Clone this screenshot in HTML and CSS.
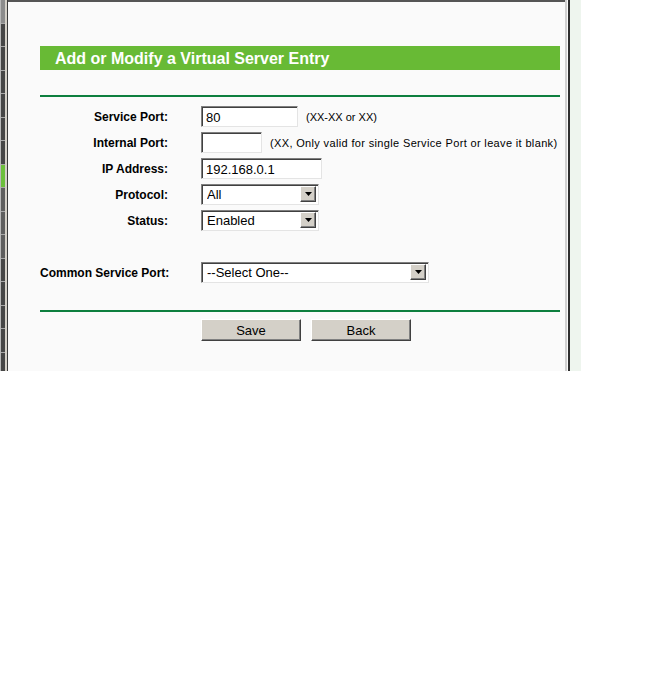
FILE: index.html
```html
<!DOCTYPE html>
<html>
  <head>
    <title>Virtual Servers</title>
    <link rel="stylesheet" href="styles.css">
  </head>
  <body>
    <div class="frame">
      <div class="menu-strip">
        <div class="menu-edge">
          <div class="menu-item light"></div>
          <div class="menu-item"></div>
          <div class="menu-item"></div>
          <div class="menu-item"></div>
          <div class="menu-item"></div>
          <div class="menu-item"></div>
          <div class="menu-item"></div>
          <div class="menu-item active"></div>
          <div class="menu-item mid"></div>
          <div class="menu-item mid"></div>
          <div class="menu-item mid"></div>
          <div class="menu-item"></div>
          <div class="menu-item"></div>
          <div class="menu-item"></div>
          <div class="menu-item"></div>
          <div class="menu-item"></div>
        </div>
        <div class="menu-border"></div>
      </div>
      <div class="main">
        <div class="title-bar">Add or Modify a Virtual Server Entry</div>
        <div class="rule"></div>
        <form class="form-grid" id="vs-form">
          <label for="servicePort">Service Port:</label>
          <div class="field">
            <input type="text" id="servicePort" class="w-97" value="80">
            <span class="hint">(XX-XX or XX)</span>
          </div>

          <label for="internalPort">Internal Port:</label>
          <div class="field">
            <input type="text" id="internalPort" class="w-61">
            <span class="hint hint-long">(XX, Only valid for single Service Port or leave it blank)</span>
          </div>

          <label for="ipAddress">IP Address:</label>
          <div class="field">
            <input type="text" id="ipAddress" class="w-121" value="192.168.0.1">
          </div>

          <label for="protocol">Protocol:</label>
          <div class="field">
            <div class="select w-118">
              <select id="protocol">
                <option>All</option>
                <option>TCP</option>
                <option>UDP</option>
              </select>
              <span class="arrow"><svg width="7" height="4" viewBox="0 0 7 4"><path d="M0 0h7L3.5 4z" fill="#000"/></svg></span>
            </div>
          </div>

          <label for="status">Status:</label>
          <div class="field">
            <div class="select w-118">
              <select id="status">
                <option>Enabled</option>
                <option>Disabled</option>
              </select>
              <span class="arrow"><svg width="7" height="4" viewBox="0 0 7 4"><path d="M0 0h7L3.5 4z" fill="#000"/></svg></span>
            </div>
          </div>

          <div class="spacer"></div>

          <label for="commonPort">Common Service Port:</label>
          <div class="field">
            <div class="select w-228">
              <select id="commonPort">
                <option>--Select One--</option>
                <option>DNS</option>
                <option>FTP</option>
                <option>HTTP</option>
              </select>
              <span class="arrow"><svg width="7" height="4" viewBox="0 0 7 4"><path d="M0 0h7L3.5 4z" fill="#000"/></svg></span>
            </div>
          </div>
        </form>
        <div class="rule rule-bottom"></div>
        <div class="buttons">
          <button type="button" id="save">Save</button>
          <button type="button" id="back">Back</button>
        </div>
      </div>
      <div class="scroll-edge">
        <div class="edge-light"></div>
        <div class="edge-gap"></div>
        <div class="edge-dark"></div>
        <div class="edge-fill"></div>
      </div>
    </div>
  </body>
</html>
```

FILE: styles.css
```css
body {
  margin: 0;
  background: #fff;
  font-family: "Liberation Sans", Arial, sans-serif;
  color: #000;
}
.frame {
  display: flex;
  width: 581px;
  height: 371px;
}
.menu-strip {
  display: flex;
  width: 8px;
  background: #fafafa;
}
.menu-edge {
  width: 5px;
  border-left: 1px solid #b8b8b8;
  box-sizing: border-box;
  display: flex;
  flex-direction: column;
}
.menu-item {
  height: 22.5px;
  background: #464646;
  border-bottom: 1px solid #a8a8a8;
  flex-shrink: 0;
}
.menu-item.light { background: #8c8c8c; }
.menu-item.mid { background: #5e5e5e; }
.menu-item.active { background: #6cbf3c; }
.menu-border {
  width: 3px;
  border-left: 2px solid #d4d0c8;
  border-right: 1px solid #3a3a3a;
  box-sizing: border-box;
}
.main {
  flex: 1;
  background: #fafafa;
  border-top: 2px solid #555;
  padding: 44px 0 0 32px;
}
.title-bar {
  width: 520px;
  height: 24px;
  box-sizing: border-box;
  background: #68ba35;
  color: #fff;
  font-weight: bold;
  font-size: 16px;
  line-height: 25px;
  padding-left: 15px;
}
.rule {
  width: 520px;
  height: 2px;
  background: #0d7f3e;
  margin-top: 25px;
}
.rule-bottom {
  margin-top: 27px;
}
.form-grid {
  display: grid;
  grid-template-columns: 128px auto;
  grid-auto-rows: 21px;
  column-gap: 33px;
  row-gap: 5px;
  align-items: center;
  margin: 9px 0 0;
}
.form-grid label {
  text-align: right;
  font-weight: bold;
  font-size: 12px;
  white-space: nowrap;
}
.field {
  display: flex;
  align-items: center;
  gap: 8px;
  height: 21px;
}
.spacer {
  grid-column: 1 / 3;
}
.hint {
  font-size: 11px;
  color: #000;
  white-space: nowrap;
}
.hint-long {
  letter-spacing: 0.35px;
}
input[type="text"] {
  height: 21px;
  box-sizing: border-box;
  border: 1px solid;
  border-color: #7f7f7f #e4e4e4 #e4e4e4 #7f7f7f;
  box-shadow: inset 1px 1px 0 #404040;
  background: #fff;
  font-family: "Liberation Sans", Arial, sans-serif;
  font-size: 13px;
  padding: 1px 4px 0;
  margin: 0;
  outline: none;
}
.w-97 { width: 97px; }
.w-61 { width: 61px; }
.w-121 { width: 121px; }
.w-118 { width: 118px; }
.w-228 { width: 228px; }
.select {
  display: flex;
  height: 21px;
  box-sizing: border-box;
  border: 1px solid;
  border-color: #7f7f7f #e4e4e4 #e4e4e4 #7f7f7f;
  box-shadow: inset 1px 1px 0 #404040;
  background: #fff;
  padding: 1px 2px 2px 1px;
}
.select select {
  flex: 1;
  appearance: none;
  -webkit-appearance: none;
  border: none;
  background: transparent;
  font-family: "Liberation Sans", Arial, sans-serif;
  font-size: 13px;
  padding: 0 0 0 4px;
  margin: 0;
  outline: none;
  min-width: 0;
}
.arrow {
  width: 16px;
  box-sizing: border-box;
  background: #d4d0c8;
  border: 1px solid;
  border-color: #fff #404040 #404040 #fff;
  box-shadow: inset -1px -1px 0 #808080;
  display: flex;
  align-items: center;
  justify-content: center;
}
.buttons {
  display: flex;
  gap: 10px;
  margin: 7px 0 0 161px;
}
.buttons button {
  width: 100px;
  height: 22px;
  box-sizing: border-box;
  background: #d4d0c8;
  border: 1px solid;
  border-color: #fff #404040 #404040 #fff;
  box-shadow: inset -1px -1px 0 #808080;
  font-family: "Liberation Sans", Arial, sans-serif;
  font-size: 13px;
  color: #000;
  padding: 0;
  cursor: pointer;
}
.scroll-edge {
  display: flex;
  width: 16px;
}
.edge-light {
  width: 2px;
  background: #d0d0d0;
}
.edge-gap {
  width: 1px;
  background: #fafafa;
}
.edge-dark {
  width: 2px;
  background: #2e2e2e;
}
.edge-fill {
  flex: 1;
  background: #eef5ee;
}
```
